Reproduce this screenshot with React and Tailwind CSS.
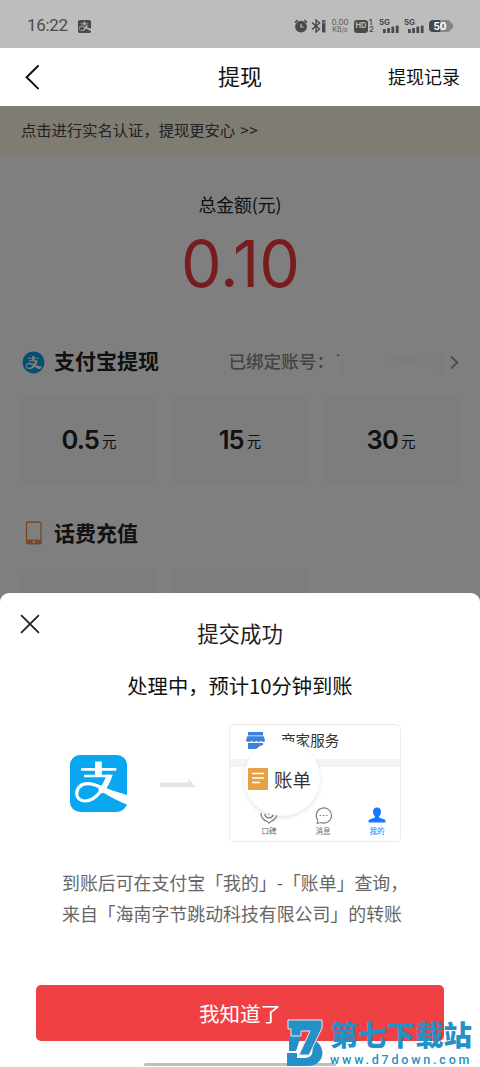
import { FaAlipay } from "react-icons/fa";
import { AiFillAlipayCircle } from "react-icons/ai";

const amounts = ["0.5", "15", "30"];

function Signal() {
  return (
    <div className="relative h-[14px] w-[20px]">
      <span className="absolute left-0 top-[-1px] text-[8px] leading-[8px] font-bold">5G</span>
      <svg className="absolute bottom-0 right-0" width="16" height="8" viewBox="0 0 16 8" fill="currentColor">
        <rect x="0" y="4" width="2.8" height="4" />
        <rect x="4.2" y="3" width="2.8" height="5" />
        <rect x="8.4" y="1.6" width="2.8" height="6.4" />
        <rect x="12.8" y="0.6" width="2.8" height="7.4" />
      </svg>
    </div>
  );
}

function StatusBar() {
  return (
    <div className="flex h-12 items-center bg-[#bdbdbd] pl-[27px] pr-[27px] pt-[4px] text-[#4a4a4a]">
      <span className="font-[Roboto] text-[17px] tracking-[-0.3px]">16:22</span>
      <FaAlipay className="ml-[9px] text-[15px]" />
      <div className="ml-auto flex items-center font-[Inter]">
        <svg width="14" height="14" viewBox="0 0 14 14" fill="none" stroke="currentColor">
          <circle cx="7" cy="7.6" r="5.9" fill="currentColor" stroke="none" />
          <path d="M1 3.6 3.6 1.2M13 3.6 10.4 1.2" strokeWidth="1.6" />
          <path d="M7 4.8V8h2.6" stroke="#bdbdbd" strokeWidth="1.2" />
        </svg>
        <svg className="ml-[3px]" width="15" height="14" viewBox="0 0 15 14" fill="none" stroke="currentColor" strokeWidth="1.4">
          <path d="M1 3.6 8.6 10 5 13V1l3.6 3L1 10.4" />
          <rect x="11" y="1" width="3.4" height="12.4" rx="1" fill="currentColor" stroke="none" />
          <path d="M11.4 3.5h2.6" stroke="#8c8c8c" />
        </svg>
        <div className="ml-[5px] w-[18px] text-center text-[8px] leading-[7px] whitespace-nowrap text-[#5c5c5c]">
          <div>0.00</div>
          <div className="text-[7px]">KB/s</div>
        </div>
        <div className="ml-[5px] flex h-[13px] w-[14px] items-center justify-center rounded-[3px] bg-[#4a4a4a] text-[7.5px] font-bold text-[#bdbdbd]">
          HD
        </div>
        <div className="ml-[1px] w-[5px] text-[7.5px] leading-[7px] font-semibold">
          <div>1</div>
          <div>2</div>
        </div>
        <div className="ml-[5px] flex gap-[5px]">
          <Signal />
          <Signal />
        </div>
        <div className="ml-[5px] flex items-center">
          <div className="flex h-[12px] w-[22px] items-center justify-center rounded-[4px] bg-linear-to-r from-[#474747] from-50% to-[#858585] to-50% text-[10px] font-bold text-white">
            50
          </div>
          <div className="h-[6px] w-[2px] rounded-r-full bg-[#858585]"></div>
        </div>
      </div>
    </div>
  );
}

function Header() {
  return (
    <div className="grid h-[58px] grid-cols-3 items-center bg-white px-5 text-[#111]">
      <svg className="ml-[5px]" width="15" height="26" viewBox="0 0 15 26" fill="none" stroke="currentColor" strokeWidth="2" strokeLinecap="round">
        <path d="M13 2 1.6 13.2 13 24.4" />
      </svg>
      <div className="pb-[4px] text-center text-[22px]">提现</div>
      <div className="pb-[2px] text-right text-[18px]">提现记录</div>
    </div>
  );
}

function Balance() {
  return (
    <div className="flex flex-col px-[21px]">
      <div className="mt-[36px] text-center text-[17.8px] leading-6">总金额(元)</div>
      <div className="mt-[13px] h-[70px] pl-[1px] text-center font-[Inter] text-[64.5px] leading-[70px] text-[#ef3a40]">
        0.10
      </div>

      <div className="mt-[48px] flex h-[30px] items-center">
        <AiFillAlipayCircle className="text-[25px] text-[#06a0e8]" />
        <span className="ml-[8px] pb-[2px] text-[21px] font-bold">支付宝提现</span>
        <span className="ml-auto pb-[1px] text-[17.6px] font-medium text-[#888]">已绑定账号：</span>
        {/* account number is masked */}
        <svg className="ml-[2px]" width="108" height="26" viewBox="0 0 108 26">
          <path d="M1 5.500h2.400v1.600H1z" fill="#888" />
          <path d="M6 8h2v18H3z" fill="#fafafa" />
          <path d="M52 8 108 3v26L96 19 52 12z" fill="#fbfbfb" />
        </svg>
        <svg className="ml-[6px]" width="9" height="15" viewBox="0 0 9 15" fill="none" stroke="#999" strokeWidth="1.8">
          <path d="M1 1.500 7.400 7.500 1 13.500" />
        </svg>
      </div>
      <div className="mt-[19px] grid grid-cols-3 gap-[15px]">
        {amounts.map((a) => (
          <div key={a} className="flex h-[87px] items-center justify-center rounded-[4px] bg-[#fafafa]">
            <div className="flex items-center">
              <span className="pt-[1px] font-[Inter] text-[25.500px] font-semibold tracking-[-0.8px]">{a}</span>
              <span className="ml-[3px] pt-[3px] text-[14.500px]">元</span>
            </div>
          </div>
        ))}
      </div>
    </div>
  );
}

function Recharge() {
  return (
    <div className="px-[21px]">
      <div className="flex h-[30px] items-center">
        <svg className="ml-[4px]" width="17" height="24" viewBox="0 0 17 24">
          <rect x="1.500" y="1" width="14.500" height="21.500" rx="1.500" fill="none" stroke="#f08c50" strokeWidth="1.300" />
          <path d="M1 18.500h15.500V22a1.200 1.200 0 0 1-1.200 1.200H2.200A1.200 1.200 0 0 1 1 22z" fill="#f08c50" />
          <circle cx="8.700" cy="20.700" r="1.200" fill="#fff" />
        </svg>
        <span className="ml-[12px] text-[21px] font-bold">话费充值</span>
      </div>
      <div className="mt-[21px] grid grid-cols-3 gap-[15px]">
        <div className="h-[87px] rounded-[4px] bg-[#fafafa]"></div>
        <div className="h-[87px] rounded-[4px] bg-[#fafafa]"></div>
      </div>
    </div>
  );
}

function AlipayLogo() {
  return (
    <svg width="57" height="57" viewBox="0 0 57 57">
      <rect width="57" height="57" rx="10" fill="#08a7f0" />
      <path d="M25 6.500h6.800V21H25zM11 13h35.300v2.800H11zM14 19.700h27v2.600H14z" fill="#fff" />
      <path d="M36.500 19.700h6.300C40.500 27 37 33.500 32.500 38.500l-4.300-3c3.600-4.500 6.400-9.500 8.300-15.800z" fill="#fff" />
      <path d="M30.500 36.500C26 42.500 20.500 46 15 46c-5 0-8.300-3-8.300-7.500 0-5.500 4.500-9.800 11-9.800 4.500 0 9.300 1.800 14.800 4.600" fill="none" stroke="#fff" strokeWidth="3.200" />
      <path d="M22 28c6 .8 13 4.500 19 7l16 5v9.500c-8-3-17-7.500-24-12z" fill="#fff" />
    </svg>
  );
}

function BillGuide() {
  return (
    <div className="relative h-[118px] w-[172px] rounded-[5px] border border-[#ececec] bg-white">
      <div className="flex h-[34px] items-center pl-[16px]">
        <svg className="mb-[3px]" width="19" height="18" viewBox="0 0 19 18" fill="#3a82dc">
          <path d="M2 0h15v3.500H2zM1.200 4.300h16.600l1.200 4.200c0 1.600-3 1.600-4 .2-1.200 1.600-3.400 1.600-4.600 0-1.200 1.600-3.400 1.600-4.600 0C4.600 10.200 0 10 0 8.500z" />
          <path d="M2 11h15v2.400c-4-.6-4.500 3.600-8 3.600H2z" />
          <path d="M13 17c1-1.500 2.200-2 4-2v2z" />
        </svg>
        <span className="ml-[16px] pb-[4px] text-[14.600px] text-[#333]">商家服务</span>
      </div>
      <div className="h-[8px] bg-[#f4f4f4]"></div>
      <div className="mt-[39px] flex text-[7.500px] leading-[10px] text-[#666]">
        <div className="ml-[12px] flex w-[54px] shrink-0 flex-col items-center gap-[1px]">
          <svg width="18" height="19" viewBox="0 0 17 18" fill="none" stroke="#777" strokeWidth="1.100">
            <path d="M1 6.500a7.500 7.500 0 0 0 5.500 8l2 1.700 2-1.700a7.500 7.500 0 0 0 5.500-8" />
            <path d="M4.500 7.500c.4 5 7.600 5 8 0M8.500 2v6" />
          </svg>
          <span>口碑</span>
        </div>
        <div className="flex w-[54px] shrink-0 flex-col items-center gap-[1px]">
          <svg width="19" height="19" viewBox="0 0 17 18" fill="none" stroke="#777" strokeWidth="1">
            <path d="M3.200 13.500a7.200 7.200 0 1 1 3 2.200l-3.700.8z" />
            <path d="M4.800 9h1.400M7.800 9h1.400M10.800 9h1.400" />
          </svg>
          <span>消息</span>
        </div>
        <div className="flex w-[54px] shrink-0 flex-col items-center gap-[1px] text-[#1677ff]">
          <svg width="18" height="19" viewBox="0 0 18 18" fill="currentColor">
            <path d="M9 1c2.600 0 4 1.700 4 4.200 0 2-.9 3.800-2 4.800v1l5.500 2c.7.300 1 .8 1 1.500V16H.5v-1.500c0-.7.300-1.200 1-1.500L7 11v-1c-1.100-1-2-2.800-2-4.800C5 2.700 6.400 1 9 1z" />
          </svg>
          <span>我的</span>
        </div>
      </div>

      {/* magnifier over the bill row */}
      <div className="absolute left-[14px] top-[15px] flex h-[76px] w-[76px] items-center rounded-full bg-white shadow-[0_2px_5px_rgba(0,0,0,0.1)]">
        <svg className="ml-[4px] mt-[2px] shrink-0" width="20" height="22" viewBox="0 0 20 22">
          <rect width="20" height="22" rx="1" fill="#e6a144" />
          <path d="M4 5.500h12M4 10h12M4 14.500h8" stroke="#fff" strokeWidth="1.500" />
        </svg>
        <span className="ml-[6px] mt-[3px] whitespace-nowrap text-[18.500px] text-[#333]">账单</span>
      </div>
    </div>
  );
}

function SuccessSheet() {
  return (
    <div className="absolute inset-x-0 bottom-0 h-[474px] rounded-t-[9px] bg-white">
      <svg className="absolute left-[20px] top-[21px]" width="20" height="20" viewBox="0 0 20 20" stroke="#222" strokeWidth="1.800" strokeLinecap="round">
        <path d="M1.600 1.600 18.400 18.400M18.400 1.600 1.600 18.400" />
      </svg>
      <div className="flex flex-col items-center">
        <div className="mt-[24px] text-[21.400px] leading-8 text-[#222]">提交成功</div>
        <div className="mt-[20px] text-[20.300px] leading-8 text-[#111]">处理中，预计10分钟到账</div>
      </div>
      <div className="mt-[23px] flex items-center pl-[70px]">
        <AlipayLogo />
        <svg className="ml-[33px]" width="36" height="10" viewBox="0 0 36 10" fill="#e6e6e6">
          <path d="M0 4.500h28V0.500L36 9.200H0z" />
        </svg>
        <div className="ml-[33px]">
          <BillGuide />
        </div>
      </div>
      <div className="mt-[25px] pl-[62px] text-[17.900px] leading-[30.500px] whitespace-nowrap text-[#666]">
        <p>到账后可在支付宝「我的」-「账单」查询，</p>
        <p>来自「海南字节跳动科技有限公司」的转账</p>
      </div>
      <button className="mx-[36px] mt-[57px] block h-[56px] w-[408px] rounded-[5px] bg-[#ef4044] text-[20.500px] text-white">
        我知道了
      </button>
      <div className="mx-auto mt-[22px] h-[3px] w-[192px] rounded-full bg-[#bfbfbf]"></div>
    </div>
  );
}

function Watermark() {
  return (
    <div className="absolute bottom-0 right-0 flex h-[49px] w-[193px] items-start text-[#2490c8]">
      <svg className="shrink-0" width="37" height="49" viewBox="0 0 37 49" fill="currentColor">
        <path d="M2 18h12L9 33H2zM0 35h10v5h8c8 0 9-7 6-17h5c11 8 8 25-9 25H0z" />
        <path
          d="M1 2h34v8L22 37H12l11-24h-9v5H4v-7H1z"
          stroke="#f9e4e4"
          strokeWidth="1"
        />
      </svg>
      <div className="ml-[6px]">
        <div className="mt-[-1px] h-[34px] whitespace-nowrap text-[28.400px] leading-[34px] font-black">第七下载站</div>
        <div className="mt-[2px] font-[Roboto] text-[12.500px] leading-[14px] font-medium tracking-[2.800px] whitespace-nowrap">www.d7down.com</div>
      </div>
    </div>
  );
}

export default function App() {
  return (
    <div className="relative h-[1067px] w-[480px] overflow-hidden bg-white font-['Noto_Sans_CJK_SC',sans-serif] text-[#222]">
      <StatusBar />
      <Header />
      <div className="relative h-[961px]">
        <div className="flex h-[50px] items-center bg-[#fef8e7] pb-[3px] pl-[21px] text-[15.300px] text-[#444]">
          点击进行实名认证，提现更安心 <span className="ml-[5px] tracking-[0.6px]">&gt;&gt;</span>
        </div>
        <div className="h-[362px]">
          <Balance />
        </div>
        <Recharge />
        <div className="absolute inset-0 bg-black/50"></div>
      </div>
      <SuccessSheet />
      <Watermark />
    </div>
  );
}
